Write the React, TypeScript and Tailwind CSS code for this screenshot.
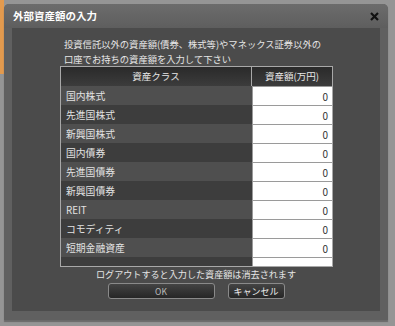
import React from "react";

const assetClasses = [
  "国内株式",
  "先進国株式",
  "新興国株式",
  "国内債券",
  "先進国債券",
  "新興国債券",
  "REIT",
  "コモディティ",
  "短期金融資産",
  "",
];

const App: React.FC = () => {
  return (
    <div
      className="flex w-[395px] h-[326px] bg-[#959595] overflow-hidden"
      style={{ fontFamily: '"Noto Sans CJK JP", "Noto Sans", sans-serif' }}
    >
      {/* left edge of the page behind the dialog */}
      <div className="w-[4px] shrink-0">
        <div className="h-[74px] bg-[#e39a4e]" />
      </div>

      <div className="flex flex-col w-[384px] h-[316px] mt-[4px] rounded-t-[5px] bg-[#606060] shadow-[0_2px_1px_#6a6a6a]">
        {/* title bar */}
        <div className="flex items-center justify-between h-[24px] pl-[9px] pr-[9px] rounded-t-[5px] bg-gradient-to-b from-[#6c6c6c] to-[#5e5e5e]">
          <span className="text-[10.5px] font-bold text-white leading-none pt-[1px]">
            外部資産額の入力
          </span>
          <svg width="9" height="9" viewBox="0 0 9 9" className="mt-[1px]">
            <path d="M1 1 L8 8 M8 1 L1 8" stroke="#111" strokeWidth="2.2" />
          </svg>
        </div>

        {/* content panel */}
        <div className="flex flex-col mx-[8px] h-[283px] bg-[#4b4b4b] pt-[9px]">
          <div className="pl-[52px] text-[9.3px] leading-[15px] text-[#e6e6e6]">
            <p>投資信託以外の資産額(債券、株式等)やマネックス証券以外の</p>
            <p>口座でお持ちの資産額を入力して下さい</p>
          </div>

          <div className="ml-[48px] mt-[-1px] w-[273px] h-[201px] border border-[#a8a8a8] overflow-hidden">
            <div className="flex h-[19px] bg-gradient-to-b from-[#2a2a2a] to-[#3c3c3c] text-[9.5px] text-[#e8e8e8]">
              <div className="flex w-[191px] items-center justify-center border-r border-[#a8a8a8]">
                資産クラス
              </div>
              <div className="flex flex-1 items-center justify-center">
                資産額(万円)
              </div>
            </div>
            {assetClasses.map((name, i) => (
              <div key={i} className="flex h-[19px]">
                <div
                  className={
                    i % 2 === 0
                      ? "flex w-[191px] items-center pl-[5px] pt-[1px] bg-[#4f4f4f] text-[9.8px] text-[#e2e2e2]"
                      : "flex w-[191px] items-center pl-[5px] pt-[1px] bg-[#3d3d3d] text-[9.8px] text-[#e2e2e2]"
                  }
                >
                  {name}
                </div>
                <div className="flex flex-1 items-center justify-end pr-[4px] bg-white border-t border-l border-[#9a9a9a] text-[10px] text-[#333]">
                  {name ? "0" : ""}
                </div>
              </div>
            ))}
          </div>

          <p className="mt-[1px] text-center text-[9.1px] leading-[13px] text-[#e6e6e6]">
            ログアウトすると入力した資産額は消去されます
          </p>

          <div className="flex justify-center gap-[13px] mt-[2px]">
            <button className="w-[107px] h-[16px] rounded-[3px] border border-[#8a8a8a] bg-gradient-to-b from-[#444] to-[#262626] text-[8.5px] leading-none text-[#bdbdbd]">
              OK
            </button>
            <button className="w-[57px] h-[16px] rounded-[3px] border border-[#8a8a8a] bg-gradient-to-b from-[#444] to-[#262626] text-[9px] leading-none text-[#eee]">
              キャンセル
            </button>
          </div>
        </div>
      </div>
    </div>
  );
};

export default App;
